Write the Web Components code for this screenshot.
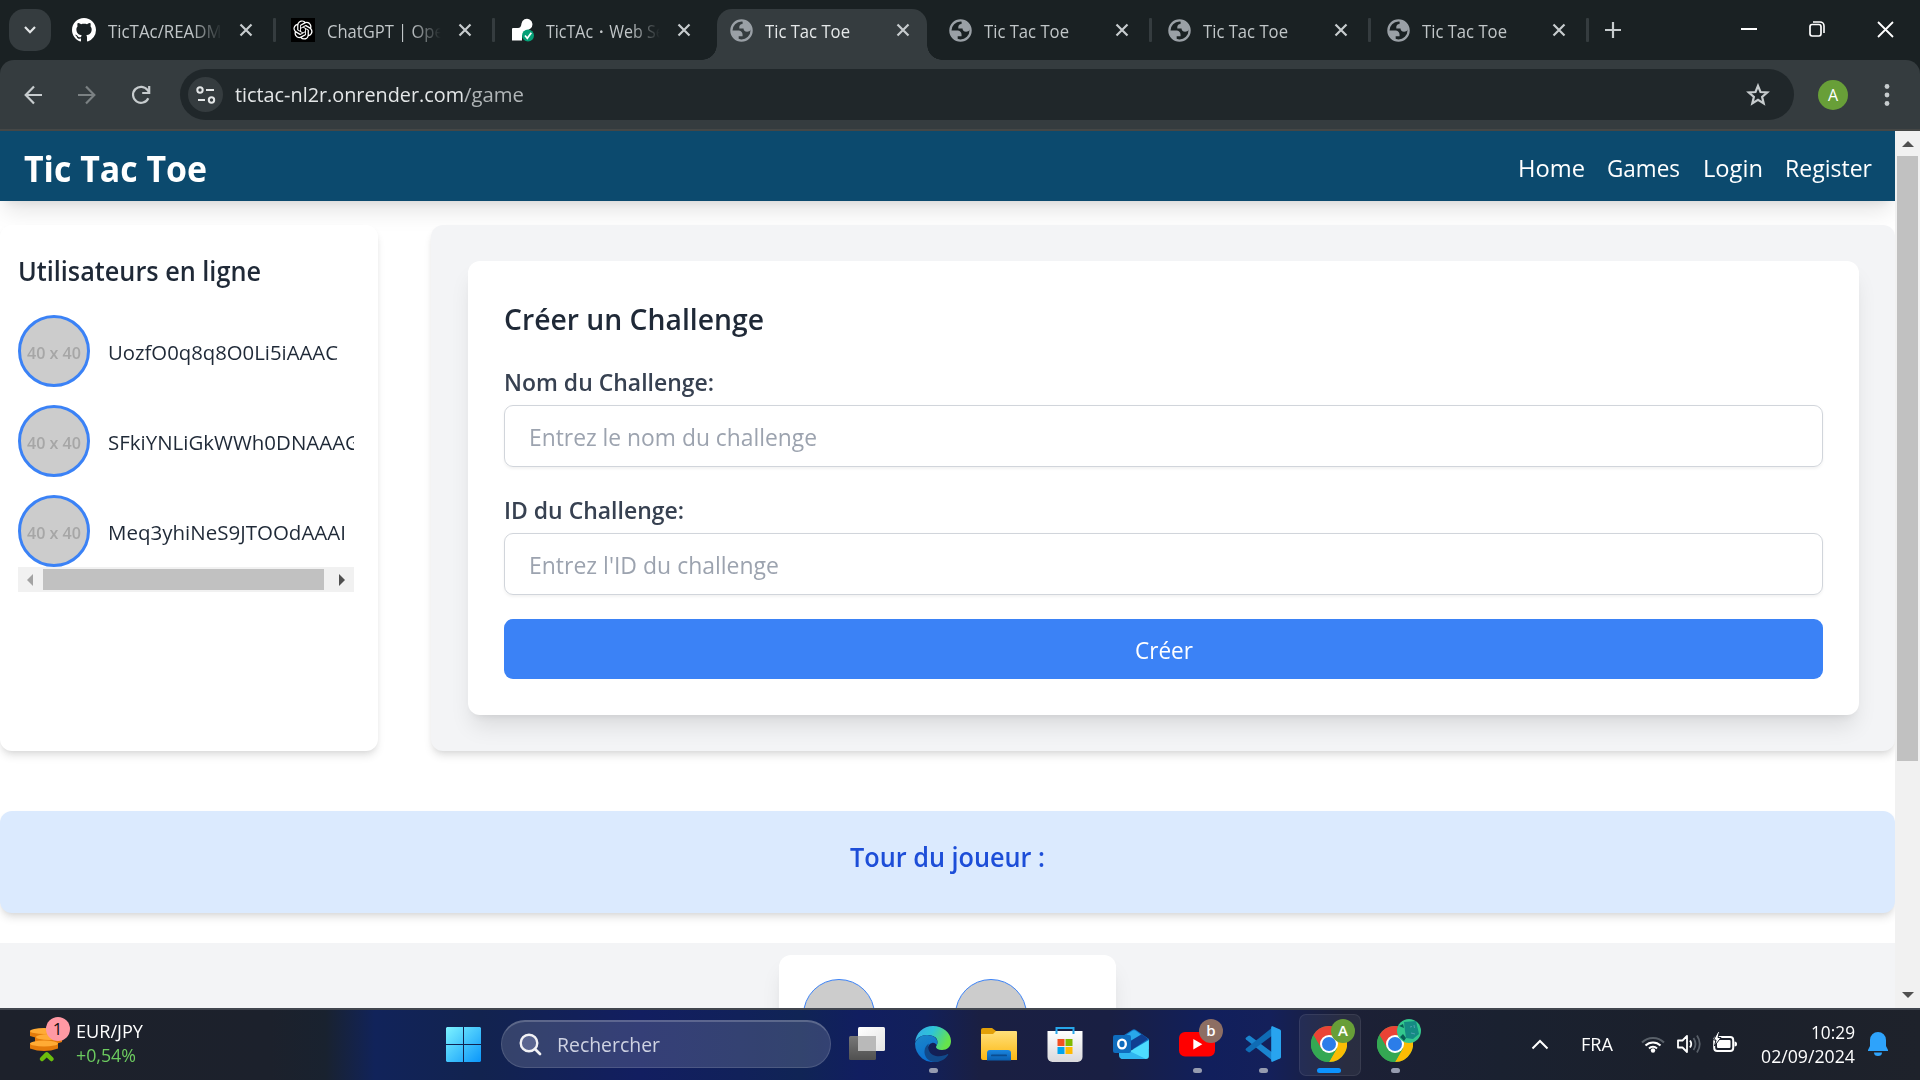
<!DOCTYPE html>
<html lang="fr">
<head>
<meta charset="utf-8">
<title>Tic Tac Toe</title>
<style>
html,body{margin:0;padding:0;width:1920px;height:1080px;overflow:hidden;background:#fff;font-family:"Open Sans","Noto Sans",sans-serif}
</style>
</head>
<body>
<desktop-screen></desktop-screen>
<script>
const define = (name, css, html) => customElements.define(name, class extends HTMLElement {
  constructor() {
    super();
    const t = document.createElement('template');
    t.innerHTML = `<style>*{box-sizing:border-box}svg{display:block;flex:none}${css}</style>` + (typeof html === 'function' ? html(this) : html);
    this.attachShadow({mode: 'open'}).append(t.content.cloneNode(true));
  }
});

const svg = (w, h, body, vb) => `<svg width="${w}" height="${h}" viewBox="${vb || `0 0 ${w} ${h}`}" fill="none">${body}</svg>`;

const ICONS = {
  github: svg(24, 24, '<path fill="#fff" d="M8 0C3.58 0 0 3.58 0 8c0 3.54 2.29 6.53 5.47 7.59.4.07.55-.17.55-.38 0-.19-.01-.82-.01-1.49-2.01.37-2.53-.49-2.69-.94-.09-.23-.48-.94-.82-1.13-.28-.15-.68-.52-.01-.53.63-.01 1.08.58 1.23.82.72 1.21 1.87.87 2.33.66.07-.52.28-.87.51-1.07-1.78-.2-3.64-.89-3.64-3.95 0-.87.31-1.59.82-2.15-.08-.2-.36-1.02.08-2.12 0 0 .67-.21 2.2.82.64-.18 1.32-.27 2-.27s1.36.09 2 .27c1.53-1.04 2.2-.82 2.2-.82.44 1.1.16 1.92.08 2.12.51.56.82 1.27.82 2.15 0 3.07-1.87 3.75-3.65 3.95.29.25.54.73.54 1.48 0 1.07-.01 1.93-.01 2.2 0 .21.15.46.55.38A8.01 8.01 0 0 0 16 8c0-4.42-3.58-8-8-8z"/>', '0 0 16 16'),
  gpt: svg(24, 24, '<path fill="#000" d="M-4-4h32v32h-32z"/><path fill="#fff" d="M22.2819 9.8211a5.9847 5.9847 0 0 0-.5157-4.9108 6.0462 6.0462 0 0 0-6.5098-2.9A6.0651 6.0651 0 0 0 4.9807 4.1818a5.9847 5.9847 0 0 0-3.9977 2.9 6.0462 6.0462 0 0 0 .7427 7.0966 5.98 5.98 0 0 0 .511 4.9107 6.051 6.051 0 0 0 6.5146 2.9001A5.9847 5.9847 0 0 0 13.2599 24a6.0557 6.0557 0 0 0 5.7718-4.2058 5.9894 5.9894 0 0 0 3.9977-2.9001 6.0557 6.0557 0 0 0-.7475-7.0729zm-9.022 12.6081a4.4755 4.4755 0 0 1-2.8764-1.0408l.1419-.0804 4.7783-2.7582a.7948.7948 0 0 0 .3927-.6813v-6.7369l2.02 1.1686a.071.071 0 0 1 .038.0615v5.5826a4.504 4.504 0 0 1-4.4945 4.4944zm-9.6607-4.1254a4.4708 4.4708 0 0 1-.5346-3.0137l.142.0852 4.783 2.7582a.7712.7712 0 0 0 .7806 0l5.8428-3.3685v2.3324a.0804.0804 0 0 1-.0332.0615L9.74 19.9502a4.4992 4.4992 0 0 1-6.1408-1.6464zM2.3408 7.8956a4.485 4.485 0 0 1 2.3655-1.9728V11.6a.7664.7664 0 0 0 .3879.6765l5.8144 3.3543-2.0201 1.1685a.0757.0757 0 0 1-.071 0l-4.8303-2.7865A4.504 4.504 0 0 1 2.3408 7.872zm16.5963 3.8558L13.1038 8.364 15.1192 7.2a.0757.0757 0 0 1 .071 0l4.8303 2.7913a4.4944 4.4944 0 0 1-.6765 8.1042v-5.6772a.79.79 0 0 0-.407-.667zm2.0107-3.0231l-.142-.0852-4.7735-2.7818a.7759.7759 0 0 0-.7854 0L9.409 9.2297V6.8974a.0662.0662 0 0 1 .0284-.0615l4.8303-2.7866a4.4992 4.4992 0 0 1 6.6802 4.66zM8.3065 12.863l-2.02-1.1638a.0804.0804 0 0 1-.038-.0567V6.0742a4.4992 4.4992 0 0 1 7.3757-3.4537l-.142.0805L8.704 5.459a.7948.7948 0 0 0-.3927.6813zm1.0976-2.3654l2.602-1.4998 2.6069 1.4998v2.9994l-2.5974 1.4997-2.6067-1.4997Z"/>', '-3 -3 30 30'),
  render: svg(24, 24, '<path fill="#fff" d="M2 11q0-1 1-1h5q3 0 3.500-4.500a5.500 5.500 0 1 1 9 5q-3 1.500-8.500 7.500v4.500H2z"/><circle cx="18" cy="17.500" r="6" fill="#06a077"/><path d="M15 17.500l2.300 2.800 4-5.500" stroke="#fff" stroke-width="1.700"/>'),
  globe: svg(27, 27, '<circle cx="12" cy="12" r="9" stroke="#9aa0a6" stroke-width="2"/><path fill="#9aa0a6" d="M4 12h4.400c3.407.022 4.922 1.730 4.543 5.127H9.488v2.470a8.004 8.004 0 0 0 10.498-8.083C19.327 12.504 18.332 13 17 13c-2.137 0-3.206-.916-3.206-2.750h-3.748c-.274-2.728.683-4.092 2.870-4.092 0-.975.327-1.597.811-1.970L15 2.600A10 10 0 0 1 12 22 10 10 0 0 1 2.500 12z" style="display:none"/><path fill="#9aa0a6" d="M3 12h5.400c3.407.022 4.922 1.730 4.543 5.127H9.488v2.900L12 21.500A9.500 9.500 0 0 0 21.500 11L19.986 11.514C19.327 12.504 18.332 13 17 13c-2.137 0-3.206-.916-3.206-2.750h-3.748c-.274-2.728.683-4.092 2.870-4.092 0-.975.327-1.597.811-1.970L12 3A9 9 0 0 0 3 12z" style="display:none"/><path fill="#9aa0a6" d="M3.500 12h4.900c3.407.022 4.922 1.730 4.543 5.127H9.488v3.200A8.800 8.800 0 0 1 3.500 12zM13.500 3.300q-.584 1-.584 2.858c-2.187 0-3.144 1.364-2.870 4.092h3.748C13.794 12.084 14.863 13 17 13c1.332 0 2.327-.496 3.300-1.400A8.500 8.500 0 0 0 13.500 3.300z"/>', '0 0 24 24')
};

define('icon-close', ':host{display:block;color:#c7ccce}', svg(14, 14, '<path d="M1.500 1.500l11 11M12.500 1.500l-11 11" stroke="currentColor" stroke-width="2.200"/>'));

define('browser-tab', `
:host{display:block;width:219px;height:60px;flex:none;color:#c1c6c8}
.cell{position:relative;height:51px;margin:9px 9px 0 3px;border-radius:15px 15px 0 0;display:flex;align-items:center;padding:0 0 9px 12px;width:216px}
:host([active]){color:#e5e8e9}
:host([active]) .bg{position:absolute;left:0;top:0;width:210px;height:51px;background:#353c3f;border-radius:15px 15px 0 0}
:host([active]) .bg::before,:host([active]) .bg::after{content:"";position:absolute;bottom:0;width:15px;height:15px}
:host([active]) .bg::before{left:-15px;background:radial-gradient(circle at 0 0,transparent 14.5px,#353c3f 15px)}
:host([active]) .bg::after{right:-15px;background:radial-gradient(circle at 100% 0,transparent 14.5px,#353c3f 15px)}
.fav,.label,icon-close{position:relative}
.fav{width:24px;height:24px;display:flex;align-items:center;justify-content:center}
.label{margin-left:12px;width:114px;height:28px;padding-top:3px;overflow:hidden;font-size:17.800px;line-height:24px;white-space:nowrap;-webkit-mask:linear-gradient(90deg,#000 84px,transparent 114px);mask:linear-gradient(90deg,#000 84px,transparent 114px)}
icon-close{margin-left:17px}
:host([last]) icon-close{margin-left:16px}
:host([last]) .cell{width:215px}
.sep{margin-left:auto;width:3px;height:24px;background:#353c3f;border-radius:1px}
:host([nosep]) .sep{display:none}`,
e => `<div class="cell"><span class="bg"></span><span class="fav">${ICONS[e.getAttribute('icon')]}</span><div class="label"><slot></slot></div><icon-close></icon-close><span class="sep"></span></div>`);

define('tab-strip', `
:host{display:flex;height:60px;background:#1a2123;flex:none}
.search{width:42px;height:42px;margin:9px 6px 0 9px;border-radius:15px;background:#353c3f;display:flex;align-items:center;justify-content:center;flex:none}
.plus{margin:22px 0 0 15px;height:16px;width:16px;flex:none}
.win{display:flex;margin-left:auto;gap:52px;padding:21px 26px 0 0}`, `
<div class="search">${svg(14, 10, '<path d="M2 2l5 5.200L12 2" stroke="#e3e6e7" stroke-width="2.200"/>')}</div>
<browser-tab icon="github"><fit-text w="123">TicTAc/README</fit-text></browser-tab>
<browser-tab icon="gpt"><fit-text w="142">ChatGPT | OpenAI</fit-text></browser-tab>
<browser-tab icon="render" nosep><fit-text w="154">TicTAc・Web Service</fit-text></browser-tab>
<browser-tab icon="globe" active nosep><fit-text w="85">Tic Tac Toe</fit-text></browser-tab>
<browser-tab icon="globe"><fit-text w="85">Tic Tac Toe</fit-text></browser-tab>
<browser-tab icon="globe"><fit-text w="85">Tic Tac Toe</fit-text></browser-tab>
<browser-tab icon="globe" last><fit-text w="85">Tic Tac Toe</fit-text></browser-tab>
<div class="plus">${svg(16, 16, '<path d="M8 0v16M0 8h16" stroke="#c7ccce" stroke-width="2.200"/>')}</div>
<div class="win">
${svg(16, 16, '<path d="M0 8h16" stroke="#fff" stroke-width="2"/>')}
${svg(16, 16, '<rect x="1" y="3.500" width="11" height="11.500" rx="2.200" stroke="#fff" stroke-width="1.700"/><path d="M4 1h7a4 4 0 0 1 4 4v7" stroke="#fff" stroke-width="1.600"/>')}
${svg(17, 17, '<path d="M1 1l15 15M16 1L1 16" stroke="#fff" stroke-width="1.800"/>')}
</div>`);

define('address-bar', `
:host{display:flex;height:71px;flex:none;background:#1a2123}
.bar{flex:1;display:flex;background:#353c3f;border-radius:14px 14px 0 0;border-bottom:2px solid #454746;padding:9px 28px 9px 24px;align-items:center}
.nav{display:flex;align-items:center;gap:36px;width:156px}
.nav svg:last-child{margin-left:-1px}
.omni{flex:none;width:1614px;height:51px;border-radius:26px;background:#20272a;display:flex;align-items:center;padding:0 24px 0 8px;color:#e3e6e7;font-size:20.500px;line-height:30px}
.site{width:35px;height:35px;border-radius:50%;background:#353c3f;display:flex;align-items:center;justify-content:center;margin-right:12px}
.url{display:flex;padding-bottom:2px}.path{color:#b0b5b7}
.star{margin-left:auto}
.avatar{width:30px;height:30px;border-radius:50%;background:#689f38;color:#fff;font-size:16px;line-height:30px;text-align:center;margin:1px 0 0 24px}
.dots{margin-left:36px}`, `
<div class="bar"><div class="nav">
${svg(18, 20, '<path d="M18 10H2M10 1.500L1.700 10l8.300 8.500" stroke="#c7ccce" stroke-width="2.200"/>')}
${svg(18, 20, '<path d="M0 10h16M8 1.500l8.300 8.500L8 18.500" stroke="#7b8183" stroke-width="2.200"/>')}
${svg(20, 20, '<path d="M17.300 13.200A8 8 0 1 1 16.600 5.200L18 7" stroke="#c7ccce" stroke-width="2.200"/><path d="M18.200 1v7h-7" stroke="#c7ccce" stroke-width="2.200"/>')}
</div>
<div class="omni"><div class="site">${svg(20, 18, '<circle cx="4" cy="4" r="2.700" stroke="#e3e6e7" stroke-width="2"/><path d="M10 4h8M2 14h7" stroke="#e3e6e7" stroke-width="2.200"/><circle cx="15.500" cy="14" r="2.700" stroke="#e3e6e7" stroke-width="2"/>')}</div>
<div class="url"><fit-text w="229">tictac-nl2r.onrender.com</fit-text><fit-text class="path" w="60">/game</fit-text></div>
<div class="star">${svg(24, 24, '<path d="M12 2.800l2.500 6.200 6.700.500-5.100 4.300 1.600 6.600L12 16.900l-5.700 3.500 1.600-6.600L2.800 9.500l6.700-.500z" stroke="#c7ccce" stroke-width="2.200"/>')}</div></div>
<div class="avatar">A</div>
<div class="dots">${svg(6, 24, '<g fill="#c7ccce"><circle cx="3" cy="3.500" r="2.400"/><circle cx="3" cy="12" r="2.400"/><circle cx="3" cy="20.500" r="2.400"/></g>')}</div></div>`);

define('site-header', `
:host{display:flex;height:70px;flex:none;background:#0c4a6e;color:#fff;align-items:center;justify-content:space-between;padding:2px 23px 0 24px;box-shadow:0 15px 22px -4.500px rgba(0,0,0,.1),0 6px 9px -6px rgba(0,0,0,.1)}
.brand{font-size:35.500px;font-weight:700;line-height:54px;padding-top:2px}
nav{display:flex;font-size:23.500px;line-height:36px;gap:22.500px;padding-top:1px}`, `
<fit-text class="brand" w="183">Tic Tac Toe</fit-text>
<nav><fit-text w="67">Home</fit-text><fit-text w="73">Games</fit-text><fit-text w="60">Login</fit-text><fit-text w="87">Register</fit-text></nav>`);

define('user-row', `
:host{display:flex;height:72px;align-items:center;gap:18px;color:#1f2937;font-size:20.600px;line-height:30px}
.pic{width:72px;height:72px;flex:none;border-radius:50%;border:3px solid #3b82f6;background:#ccc;color:#a6a6a6;font:600 15.500px/72px "Open Sans",sans-serif;display:flex;justify-content:center;align-items:center}
.pic fit-text{filter:blur(.5px);padding:3px 0 0;line-height:60px}
.name{padding-top:2px}`,
e => `<div class="pic"><fit-text w="54">40 x 40</fit-text></div><fit-text class="name" w="${e.getAttribute('w')}">${e.getAttribute('name')}</fit-text>`);

define('online-users', `
:host{display:block;width:378px;height:526px;flex:none;background:#fff;border-radius:12px;padding:25px 24px 0 18px;box-shadow:0 6px 9px -1.500px rgba(0,0,0,.1),0 3px 6px -3px rgba(0,0,0,.1)}
.h{font-size:26.500px;font-weight:560;line-height:42px;color:#1f2937;margin-bottom:23px}
.list{display:flex;flex-direction:column;gap:18px;overflow:hidden}
.sb{height:25px;background:#f1f1f1;display:flex;align-items:center;padding:0 9px}
.thumb{width:281px;height:21px;background:#c1c1c1;margin:0 15px 0 10px}`, `
<fit-text class="h" w="243">Utilisateurs en ligne</fit-text>
<div class="list"><user-row name="UozfO0q8q8O0Li5iAAAC" w="230"></user-row><user-row name="SFkiYNLiGkWWh0DNAAAG" w="252"></user-row><user-row name="Meq3yhiNeS9JTOOdAAAI" w="238"></user-row></div>
<div class="sb">${svg(6, 12, '<path fill="#a3a3a3" d="M6 0v12L0 6z"/>')}<div class="thumb"></div>${svg(6, 12, '<path fill="#505050" d="M0 0v12l6-6z"/>')}</div>`);

define('form-field', `
:host{display:block;margin-bottom:24px}
.label{font-size:23.500px;line-height:36px;font-weight:560;color:#374151;padding-top:1px;margin-bottom:5px}
.input{height:62px;border:1px solid #d1d5db;border-radius:9px;display:flex;align-items:center;padding:2px 24px 0;color:#9ca3af;font-size:23.500px;line-height:36px;box-shadow:0 1.500px 3px rgba(0,0,0,.05)}`,
e => `<fit-text class="label" w="${e.getAttribute('lw')}">${e.getAttribute('label')}</fit-text><div class="input"><fit-text w="${e.getAttribute('pw')}">${e.getAttribute('hint')}</fit-text></div>`);

define('challenge-panel', `
:host{display:block;width:1464px;height:526px;background:#f3f4f6;border-radius:12px;padding:36px 36px 0 37px;box-shadow:0 6px 9px -1.500px rgba(0,0,0,.1),0 3px 6px -3px rgba(0,0,0,.1)}
.card{background:#fff;border-radius:12px;height:454px;padding:36px;box-shadow:0 15px 22px -4.500px rgba(0,0,0,.1),0 6px 9px -6px rgba(0,0,0,.1)}
.h{font-size:29.400px;font-weight:560;line-height:42px;color:#1f2937;padding-top:1px;margin-bottom:23px}
.btn{height:60px;border-radius:9px;background:#3b82f6;color:#fff;font-size:23.500px;line-height:36px;display:flex;align-items:center;justify-content:center;padding-top:2px}`, `
<div class="card"><fit-text class="h" w="260">Créer un Challenge</fit-text>
<form-field label="Nom du Challenge:" lw="210" hint="Entrez le nom du challenge" pw="288"></form-field>
<form-field label="ID du Challenge:" lw="180" hint="Entrez l'ID du challenge" pw="250"></form-field>
<div class="btn"><fit-text w="58">Créer</fit-text></div></div>`);

define('turn-banner', `
:host{display:flex;justify-content:center;height:102px;margin-top:60px;padding-top:25px;background:#dbeafe;border-radius:12px;color:#1d4ed8;font-size:26.500px;font-weight:560;line-height:42px;box-shadow:0 6px 9px -1.500px rgba(0,0,0,.1),0 3px 6px -3px rgba(0,0,0,.1)}`,
`<fit-text w="195">Tour du joueur :</fit-text>`);

define('game-board', `
:host{display:flex;justify-content:center;margin-top:30px;padding-top:12px;height:300px;background:#f3f4f6}
.card{width:337px;height:280px;background:#fff;border-radius:12px;padding:24px;display:flex;gap:80px;box-shadow:0 15px 22px -4.500px rgba(0,0,0,.1),0 6px 9px -6px rgba(0,0,0,.1)}
i{width:72px;height:72px;border-radius:50%;background:#ccc;border:1px solid #3b82f6;flex:none}`, `<div class="card"><i></i><i></i></div>`);

define('v-scrollbar', `
:host{display:flex;flex-direction:column;align-items:center;width:25px;flex:none;background:#f1f1f1;padding:10px 0}
.thumb{width:21px;height:605px;background:#c1c1c1;margin:9px 0 auto}`, `
${svg(12, 6, '<path fill="#505050" d="M0 6h12L6 0z"/>')}<div class="thumb"></div>${svg(12, 6, '<path fill="#505050" d="M0 0h12L6 6z"/>')}`);

define('page-view', `
:host{display:flex;height:877px;flex:none;overflow:hidden;background:#fff}
main{width:1895px;flex:none;height:877px;overflow:hidden}
.row{display:flex;justify-content:space-between;margin-top:24px}`, `
<main><site-header></site-header><div class="row"><online-users></online-users><challenge-panel></challenge-panel></div><turn-banner></turn-banner><game-board></game-board></main><v-scrollbar></v-scrollbar>`);

const chrome = `<circle cx="18" cy="18" r="18" fill="#34a853"/><path fill="#ea4335" d="M2.400 9A18 18 0 0 1 33.600 9H18L10.200 22.500z"/><path fill="#fbbc04" d="M33.600 9A18 18 0 0 1 18 36l7.800-13.500L18 9z"/><path fill="#34a853" d="M2.400 9A18 18 0 0 0 18 36l7.800-13.500H10.200z"/><circle cx="18" cy="18" r="9" fill="#fff"/><circle cx="18" cy="18" r="7" fill="#2b7de9"/>`;
const APPS = {
  task: svg(36, 36, '<defs><linearGradient id="a" x2="0" y2="1"><stop stop-color="#777"/><stop offset="1" stop-color="#505050"/></linearGradient><linearGradient id="b" x2="1" y2="1"><stop stop-color="#fff"/><stop offset="1" stop-color="#e4e4e4"/></linearGradient></defs><rect y="10" width="27" height="24" rx="1.500" fill="url(#a)"/><rect x="9" y="1" width="27" height="24" rx="1.500" fill="url(#b)"/><path fill="#b9b9b9" d="M9 10h18v15H9z"/>'),
  edge: svg(36, 36, `<defs><linearGradient id="a" x2="1" y2=".35"><stop stop-color="#36a8e8"/><stop offset=".5" stop-color="#2ec4d8"/><stop offset="1" stop-color="#66e34b"/></linearGradient><linearGradient id="b" x2=".4" y2="1"><stop stop-color="#1c87c8"/><stop offset="1" stop-color="#0a6fd0"/></linearGradient></defs>
<path fill="url(#a)" d="M.200 16C1 7 8 0 18 0c10 0 18 7 18 15 0 6-4 9-9 9-4 0-6-1.500-6-3 0-1 1.500-2 1.500-5 0-5-5-7-10-7C6 9 2 12 .200 16z"/>
<path fill="url(#b)" d="M.100 17C2 12 6.500 9 12 9c6 0 10.500 3 10.500 7.500 0 1-.500 2-1 2.500-1-2-3-2.500-4.500-2-4 1-5.500 6-3 11 1.500 3.500 5 6.500 10 7A18 18 0 0 1 .100 17z"/>
<path fill="#114a8b" d="M14 17.500c-2 4 0 9.500 4 11.500 5 2.500 11 1 14.500-1 .600-.300 1 .100.700.700C30.500 33 26 36 20 36c-7 0-11-6-10.500-11 .300-3.500 2-6 4.500-7.500z"/>`),
  folder: svg(36, 36, '<defs><linearGradient id="a" x2="0" y2="1"><stop stop-color="#ffe07a"/><stop offset="1" stop-color="#fcb813"/></linearGradient><linearGradient id="b" x2="0" y2="1"><stop stop-color="#1a86e0"/><stop offset="1" stop-color="#0a5fb0"/></linearGradient></defs><path fill="#e2a008" d="M0 4a2 2 0 0 1 2-2h9l4 3v8H0z"/><path fill="url(#a)" d="M12 8l3-3h20q1 0 1 1v28H2q-2 0-2-2V8z"/><path fill="url(#b)" d="M6 34.500V27q0-3 3-3h18q3 0 3 3v7.500z"/><rect x="10" y="28.500" width="16" height="1.800" rx=".9" fill="#0a4d91"/>'),
  store: svg(36, 36, '<defs><linearGradient id="a" x2="0" y2="1"><stop stop-color="#fff"/><stop offset="1" stop-color="#d9d9dc"/></linearGradient></defs><path fill="url(#a)" d="M.500 5h35v26a5 5 0 0 1-5 5h-25a5 5 0 0 1-5-5z"/><path d="M9.500 8V2h17v6" stroke="#27a6ea" stroke-width="2"/><path fill="#f25022" d="M10.500 13h7v7h-7z"/><path fill="#7fba00" d="M18.500 13h7v7h-7z"/><path fill="#00a4ef" d="M10.500 21h7v7h-7z"/><path fill="#ffb900" d="M18.500 21h7v7h-7z"/>'),
  outlook: svg(36, 36, '<path fill="#1273c4" d="M8 11l11-7q2-1.500 4 0l13 9v10H8z"/><path fill="#28a8ea" d="M8 13l11-8q2-1.500 4 0l8 6-16 11z"/><path fill="#103f91" d="M14 17l15-9 6 5-18 12z"/><path fill="#4ddcff" d="M35.900 14v16a3 3 0 0 1-3 3H10a4 4 0 0 1-3-2z"/><path fill="#2fb5f0" d="M6 20l27 13H10a4 4 0 0 1-4-4z"/><rect y="9" width="18" height="18" rx="2" fill="#0f6cbd"/><ellipse cx="9" cy="18" rx="3.800" ry="4.400" stroke="#fff" stroke-width="2.400"/>'),
  youtube: svg(36, 36, '<rect y="6" width="36" height="24.500" rx="6" fill="#f00"/><path fill="#fff" d="M14.300 13l9 5.300-9 5.300z"/>'),
  vscode: svg(36, 36, '<path fill="#1a85cf" d="M1.200 11.500l2-1.600q1-.700 2 0L28 27v8L1 13.500q-1-1 .200-2z"/><path fill="#0f6cb5" d="M1.200 24.500l2 1.600q1 .700 2 0L28 9V1L1 22.500q-1 1 .200 2z"/><path fill="#28a4ef" d="M27 0l8 3.500q1 .500 1 1.500v26q0 1-1 1.500L27 36q-.800-.500-.800-1.500v-33Q26.200.500 27 0z"/>'),
  chrome: svg(36, 36, chrome)
};
define('task-app', `
:host{display:flex;position:relative;width:66px;height:72px;flex:none;justify-content:center;padding-top:18px}
:host([active])::before{content:"";position:absolute;left:3px;top:6px;width:60px;height:60px;border-radius:7px;background:rgba(255,255,255,.06);border:1px solid rgba(255,255,255,.08)}
svg{position:relative}
.dot{position:absolute;top:60px;left:28.500px;width:9px;height:5px;border-radius:3px;background:#969cb0;display:none}
:host([open]) .dot{display:block}
:host([active]) .dot{display:block;left:21px;width:24px;background:#0c93ff}
.badge{position:absolute;left:35px;top:11px;width:24px;height:24px;border-radius:50%;color:#fff;font:600 15px/23px "Open Sans",sans-serif;text-align:center}`,
e => { const b = e.getAttribute('badge'), c = e.getAttribute('color');
  return APPS[e.getAttribute('icon')] + (c ? `<span class="badge" style="background:${c}">${b || svg(24, 24, '<path fill="#158a83" d="M7 3l12-1 3 13-6 5-7-1-1-7z"/><path fill="#075e55" d="M3 18l3-3 3 4-2 3zM2 7l4-2 1 4z"/><path d="M13 8l2-.5M14 14l4 1M17 6l.5 3" stroke="#4fa0b0"/>')}</span>` : '') + '<span class="dot"></span>'; });

define('task-bar', `
:host{display:flex;height:72px;flex:none;border-top:2px solid #41464f;color:#fff;overflow:hidden;background:linear-gradient(90deg,#1d212b 0,#1c212c 270px,#19222f 325px,#11235a 375px,#12234f 480px,#121e60 640px,#11215a 740px,#102455 800px,#111e60 860px,#12205a 925px,#1a1f42 980px,#191f43 1110px,#111f5c 1210px,#14205a 1270px,#1c2036 1345px,#1a2130 1500px,#1b202b 1700px,#1e222b 1920px);font-size:18px;line-height:24px}
.in{display:flex;margin-top:-2px;height:72px;width:1920px;flex:none}
.widget{display:flex;width:433px;padding-left:30px}
.coins{position:relative;width:46px}
.coins svg{position:absolute;top:19px;left:0}
.badge{position:absolute;left:15.500px;top:9px;width:24px;height:24px;border-radius:50%;background:#ff99a4;color:#111;font-size:17px;line-height:24px;text-align:center}
.two{padding-top:11px}.up{color:#6ccb5f}
.win{width:68px;padding:19px 0 0 13px}
.search{width:330px;height:48px;margin:12px 3px 0 0;border-radius:24px;border:1px solid rgba(255,255,255,.12);border-top:2px solid rgba(255,255,255,.2);background:rgba(255,255,255,.15);display:flex;align-items:center;padding:0 0 1px 17px;gap:15px;color:#ced2e2;font-size:20.800px;line-height:28px}
.tray{display:flex;margin-left:auto;align-items:center}
.tray>svg{margin-right:12px}
.clock{display:flex;flex-direction:column;align-items:flex-end;margin:0 13px 1px 12px}`, `
<div class="in"><div class="widget"><div class="coins">
${svg(34, 38, '<g fill="#e47b0a"><path d="M0 4h28v5q-14 5 -28 0zM5 10h27v5q-12 5-27 0zM0 16.500h28v5q-14 5-28 0z"/></g><g fill="#ffab35"><ellipse cx="14" cy="4" rx="14" ry="3"/><ellipse cx="19" cy="10" rx="13" ry="3"/><ellipse cx="14" cy="16.500" rx="14" ry="3"/></g><path d="M12 32l4.700-4.700L21.500 32" stroke="#6bbf0d" stroke-width="4.500" stroke-linecap="round" stroke-linejoin="round"/>')}
<span class="badge">1</span></div>
<div class="two"><fit-text w="67">EUR/JPY</fit-text><fit-text class="up" w="60">+0,54%</fit-text></div></div>
<div class="win">${svg(35, 35, '<defs><linearGradient id="w" gradientUnits="userSpaceOnUse" x1="0" y1="0" x2="35" y2="35"><stop stop-color="#7df3ff"/><stop offset="1" stop-color="#0a96fa"/></linearGradient></defs><path fill="url(#w)" d="M1 0h16v17H0V1zM18 0h16l1 1v16H18zM0 18h17v17H1l-1-1zM18 18h17v16l-1 1H18z"/>')}</div>
<div class="search">${svg(23, 23, '<circle cx="10" cy="10" r="8.300" fill="#5a6590" stroke="#f2f2f5" stroke-width="2.400"/><path d="M16 16l5 5" stroke="#f2f2f5" stroke-width="2.700" stroke-linecap="round"/>')}<fit-text w="103">Rechercher</fit-text></div>
<task-app icon="task"></task-app><task-app icon="edge" open></task-app><task-app icon="folder"></task-app><task-app icon="store"></task-app><task-app icon="outlook"></task-app><task-app icon="youtube" open badge="b" color="#8d6e63"></task-app><task-app icon="vscode" open></task-app><task-app icon="chrome" active badge="A" color="#689f38"></task-app><task-app icon="chrome" open color="#33c78d"></task-app>
<div class="tray">
${svg(18, 12, '<path d="M1.500 10.500L9 3l7.500 7.500" stroke="#fff" stroke-width="2"/>')}
<fit-text w="32" style="margin:0 28px 0 20px">FRA</fit-text>
${svg(24, 18, '<g stroke="#fff" stroke-width="2"><path d="M1 7.500a15.600 15.600 0 0 1 22 0" stroke="#596069"/><path d="M4.500 10.500a10.600 10.600 0 0 1 15 0M8 13.500a5.700 5.700 0 0 1 8 0"/></g><circle cx="12" cy="15.500" r="2.200" fill="#fff"/>')}
${svg(24, 20, '<path d="M1 6.500h4.500L10 2v16l-4.500-4.500H1z" stroke="#fff" stroke-width="1.800" stroke-linejoin="round"/><path d="M13 6.500q2.500 3.500 0 7" stroke="#fff" stroke-width="1.800"/><path d="M16.500 4q4 6 0 12M20 1.500q5.500 8.500 0 17" stroke="#596069" stroke-width="1.800"/>')}
${svg(24, 24, '<rect x="1.200" y="5" width="19" height="14" rx="3" stroke="#fff" stroke-width="2"/><rect x="4" y="8" width="13.500" height="8" rx="1" fill="#fff"/><path fill="#fff" d="M21.500 9.500q2.500 0 2.500 2.500t-2.500 2.500z"/><path fill="#fff" stroke="#1b202b" d="M5-.500L.500 8H3l-1.500 6L8 5.500H5L6.500-.500z"/>')}
<div class="clock"><fit-text w="44">10:29</fit-text><fit-text w="94">02/09/2024</fit-text></div>
${svg(20, 24, '<path fill="#2ea3fb" d="M10 0a8 8 0 0 1 8 8v6l2 4v1H0v-1l2-4V8a8 8 0 0 1 8-8zM6 20.500h8a4 3.500 0 0 1-8 0z"/>')}
<span style="width:20px"></span></div></div>`);

define('desktop-screen', ':host{display:flex;flex-direction:column;width:1920px;height:1080px;overflow:hidden}',
  '<tab-strip></tab-strip><address-bar></address-bar><page-view></page-view><task-bar></task-bar>');

// Condenses the slotted text horizontally so that it fills the width given in "w".
customElements.define('fit-text', class extends HTMLElement {
  constructor() {
    super();
    this.attachShadow({mode: 'open'}).innerHTML = '<style>:host{display:block;white-space:nowrap;flex:none}span{display:block;width:max-content;transform-origin:0 50%}</style><span><slot></slot></span>';
  }
  connectedCallback() {
    const w = +this.getAttribute('w'), span = this.shadowRoot.querySelector('span');
    this.style.width = w + 'px';
    const fit = () => {
      span.style.transform = 'none';
      span.style.transform = `scaleX(${w / span.getBoundingClientRect().width})`;
    };
    fit();
    requestAnimationFrame(fit);
  }
});
</script>
</body>
</html>
